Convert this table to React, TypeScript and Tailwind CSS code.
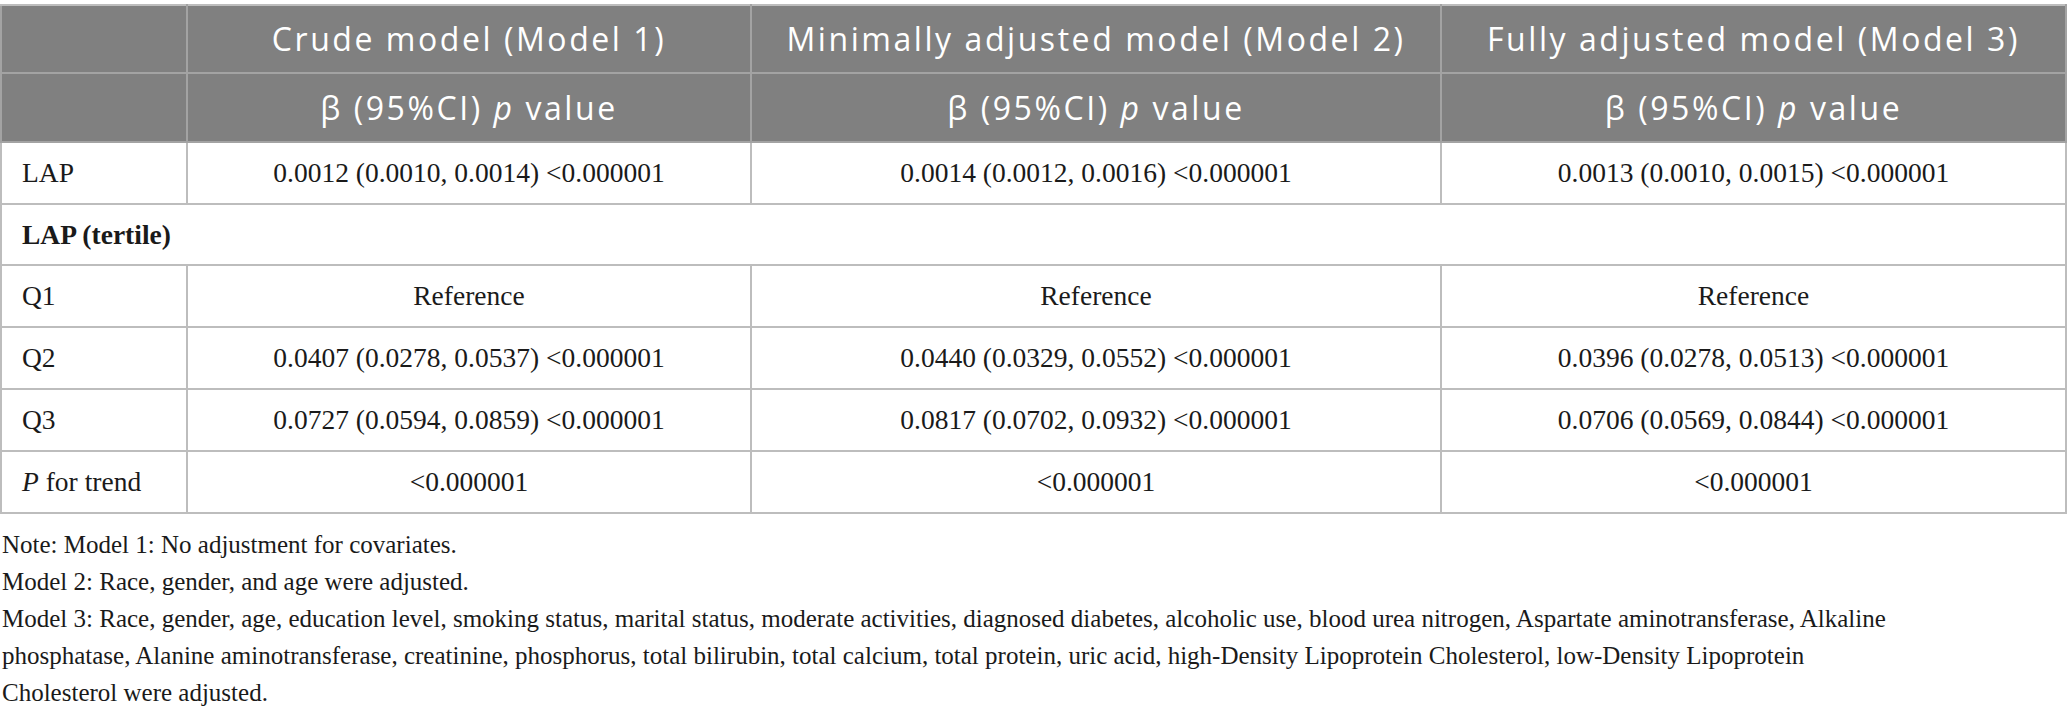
import React from "react";

type Row = { label: React.ReactNode; values: string[] };

const HEADERS = [
  "Crude model (Model 1)",
  "Minimally adjusted model (Model 2)",
  "Fully adjusted model (Model 3)",
];

const LAP_ROW: Row = {
  label: "LAP",
  values: [
    "0.0012 (0.0010, 0.0014) <0.000001",
    "0.0014 (0.0012, 0.0016) <0.000001",
    "0.0013 (0.0010, 0.0015) <0.000001",
  ],
};

const TERTILE_ROWS: Row[] = [
  { label: "Q1", values: ["Reference", "Reference", "Reference"] },
  {
    label: "Q2",
    values: [
      "0.0407 (0.0278, 0.0537) <0.000001",
      "0.0440 (0.0329, 0.0552) <0.000001",
      "0.0396 (0.0278, 0.0513) <0.000001",
    ],
  },
  {
    label: "Q3",
    values: [
      "0.0727 (0.0594, 0.0859) <0.000001",
      "0.0817 (0.0702, 0.0932) <0.000001",
      "0.0706 (0.0569, 0.0844) <0.000001",
    ],
  },
  {
    label: (
      <>
        <i>P</i> for trend
      </>
    ),
    values: ["<0.000001", "<0.000001", "<0.000001"],
  },
];

const serif = "font-['Liberation_Serif','Times_New_Roman',serif]";
const sans = "font-['Open_Sans','Noto_Sans',sans-serif]";

const BodyRow = ({ row }: { row: Row }) => (
  <tr className="h-[62px]">
    <td className="border-2 border-[#bdbdbd] pl-5 text-left">{row.label}</td>
    {row.values.map((v, i) => (
      <td key={i} className="border-2 border-[#bdbdbd] text-center">
        {v}
      </td>
    ))}
  </tr>
);

export default function App() {
  return (
    <div className={`w-[2068px] h-[712px] bg-white pt-1 text-[#1a1a1a] ${serif}`}>
      <table className="w-[2067px] table-fixed border-collapse text-[27.5px]">
        <colgroup>
          <col className="w-[186px]" />
          <col className="w-[564px]" />
          <col className="w-[690px]" />
          <col />
        </colgroup>
        <thead className={`bg-[#808080] text-white ${sans} text-[32px] tracking-[0.08em]`}>
          <tr className="h-[68px]">
            <th className="border-2 border-[#a3a3a3] border-t-[#bdbdbd]" />
            {HEADERS.map((h) => (
              <th key={h} className="border-2 border-[#a3a3a3] border-t-[#bdbdbd] font-normal">
                {h}
              </th>
            ))}
          </tr>
          <tr className="h-[69px]">
            <th className="border-2 border-[#a3a3a3]" />
            {HEADERS.map((h) => (
              <th key={h} className="border-2 border-[#a3a3a3] font-normal">
                β (95%CI) <i>p</i> value
              </th>
            ))}
          </tr>
        </thead>
        <tbody>
          <BodyRow row={LAP_ROW} />
          <tr className="h-[61px]">
            <td colSpan={4} className="border-2 border-[#bdbdbd] pl-5 text-left font-bold">
              LAP (tertile)
            </td>
          </tr>
          {TERTILE_ROWS.map((r, i) => (
            <BodyRow key={i} row={r} />
          ))}
        </tbody>
      </table>

      <div className="mt-3 pl-[2px] text-[25px] leading-[37px] whitespace-nowrap">
        <p>Note: Model 1: No adjustment for covariates.</p>
        <p>Model 2: Race, gender, and age were adjusted.</p>
        <p>
          Model 3: Race, gender, age, education level, smoking status, marital status, moderate
          activities, diagnosed diabetes, alcoholic use, blood urea nitrogen, Aspartate
          aminotransferase, Alkaline
        </p>
        <p>
          phosphatase, Alanine aminotransferase, creatinine, phosphorus, total bilirubin, total
          calcium, total protein, uric acid, high-Density Lipoprotein Cholesterol, low-Density
          Lipoprotein
        </p>
        <p>Cholesterol were adjusted.</p>
      </div>
    </div>
  );
}
